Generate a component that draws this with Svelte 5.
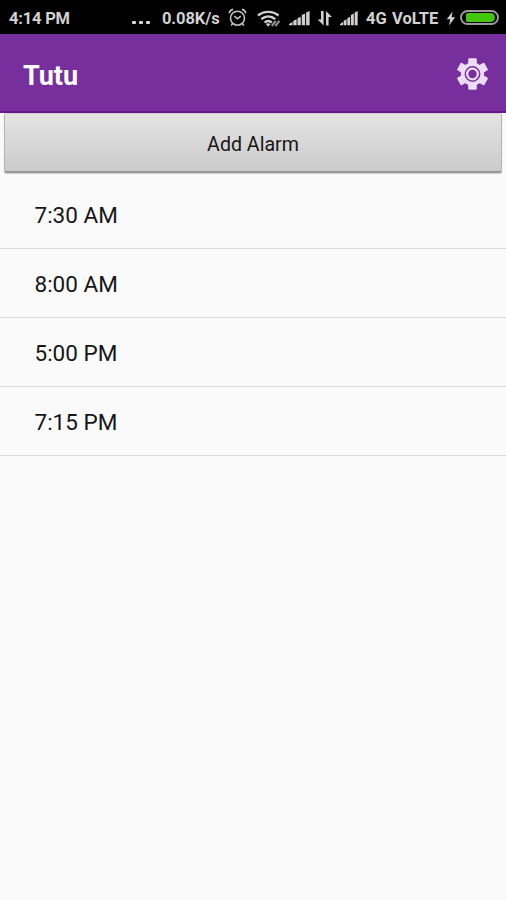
<script>
  const alarms = ['7:30 AM', '8:00 AM', '5:00 PM', '7:15 PM'];
</script>

{#snippet signal(width)}
  <svg class="signal" {width} height="16" viewBox="0 0 21 16" preserveAspectRatio="none">
    <path d="M0 15.2v-1.2l3.600-2v3.200zM4.300 15.2v-4.400l3.300-1.500v5.900zM8.500 15.2V8.200l3.300-1.500v8.500zM12.800 15.2V5l3.300-1.500v11.700zM17.100 15.2V2.500L20.600 1v14.200z" />
  </svg>
{/snippet}

<div class="screen">
  <header class="status">
    <span class="clock">4:14 PM</span>
    <span class="dots"><i></i><i></i><i></i></span>
    <span class="speed">0.08K/s</span>
    <svg class="alarm" width="19" height="19" viewBox="0 0 19 19">
      <circle cx="9.5" cy="10.2" r="7" />
      <path d="M1.2 5.2C1.7 3 3 1.8 5 1.4M14 1.4c2 .4 3.3 1.6 3.8 3.8M6.3 8.2l3.2 2.6 3.2-2.6M4.5 15.8l-1.3 1.7M14.5 15.8l1.3 1.7" />
    </svg>
    <svg class="wifi" width="24" height="17" viewBox="0 0 24 17">
      <path class="arcs" d="M1 5.500C6.800.6 15.700.6 21.500 5.500M4.300 9.200C8.500 5.600 14 5.600 18.200 9.200M7.600 12.600c2.200-2 5.100-2 7.300 0" />
      <path d="M8.900 14.100c1.400-1 3.200-1 4.600 0L11.200 16.800z" />
      <path class="activity" d="M14.800 16l4-5.200M18.400 16l4-5.200" />
    </svg>
    {@render signal(21)}
    <svg class="arrows" width="16" height="16" viewBox="0 0 16 16">
      <path d="M4 1h2.600v14.500L.6 9.500H4zM9 15.500V1l6 6h-3.400v8.500z" />
    </svg>
    {@render signal(18)}
    <span class="network">4G</span>
    <span class="volte">VoLTE</span>
    <svg class="bolt" width="10" height="15" viewBox="0 0 10 15">
      <path d="M6.500.500L.8 8.300h3.400L3 14.500l6.200-8.200H5.600z" />
    </svg>
    <div class="battery"><div class="charge"></div></div>
  </header>

  <div class="toolbar">
    <h1>Tutu</h1>
    <svg class="gear" width="38" height="38" viewBox="-19.5 -19 38 38">
      <circle r="11.600" />
      {#each [0, 60, 120] as angle}
        <path transform="rotate({angle})" d="M-3.500-15.700h7l.8.7v30l-.8.700h-7l-.8-.7v-30z" />
      {/each}
      <circle class="groove" r="7.200" />
      <circle class="hub" r="4.200" />
    </svg>
  </div>

  <button class="add">Add Alarm</button>

  <ul>
    {#each alarms as alarm}
      <li>{alarm}</li>
    {/each}
  </ul>
</div>

<style>
  :global(body) { margin: 0; background: #fafafa; }

  .screen {
    width: 506px;
    height: 900px;
    overflow: hidden;
    display: flex;
    flex-direction: column;
    background: #fafafa;
    font-family: Roboto, "Liberation Sans", sans-serif;
    color: #161616;
  }

  .status {
    height: 34px;
    flex: none;
    box-sizing: border-box;
    padding: 2px 6px 0 9px;
    display: flex;
    align-items: center;
    background: #000;
    color: #d2d2d2;
    font-size: 16.500px;
    font-weight: 700;
    line-height: 32px;
    white-space: nowrap;
  }

  .status > * { flex: none; }
  .status > span { padding-top: 1px; }
  .status svg { fill: #d0d0d0; }

  .clock { width: 123px; letter-spacing: -0.2px; }

  .status > .dots { display: flex; gap: 3px; width: 30px; padding-top: 9px; }
  .dots i { width: 4px; height: 3px; border-radius: 1px; background: #d6d6d6; }

  .speed { width: 66px; letter-spacing: -0.1px; }

  .status .alarm { fill: none; stroke: #c4c4c4; stroke-width: 1.600; margin-right: 10px; margin-top: -2px; }

  .wifi { margin-right: 8px; }
  .wifi .arcs { fill: none; stroke: #d0d0d0; stroke-width: 2.400; }
  .wifi .activity { stroke: #909090; stroke-width: 2.200; }

  .arrows { margin: 0 7px 0 7px; }

  .network { width: 26px; margin-left: 8px; }
  .volte { width: 54px; }
  .bolt { margin-right: 4px; }

  .battery {
    box-sizing: border-box;
    width: 39px;
    height: 15px;
    margin-top: -1px;
    border: 2px solid #9a9a9a;
    border-radius: 8px;
    padding: 1px 2px 1px 4px;
  }
  .charge { height: 9px; border-radius: 2px 5px 5px 2px; background: #44c510; }

  .toolbar {
    flex: none;
    height: 79px;
    box-sizing: border-box;
    padding: 0 15px 0 23px;
    display: flex;
    align-items: center;
    justify-content: space-between;
    background: #772f9e;
    border-bottom: 2px solid #6a168f;
  }

  h1 { margin: 6px 0 0; font-size: 27px; line-height: 32px; font-weight: 700; color: #fff; }

  .gear { fill: #ecdcf5; margin-top: 2px; }
  .gear .groove { fill: none; stroke: #772f9e; stroke-width: 1.400; }
  .gear .hub { fill: #772f9e; }

  .add {
    flex: none;
    height: 60px;
    margin: 0 4px;
    padding: 5px 0 0;
    border: 1px solid #b5b5b5;
    border-top-color: #cfcbc9;
    border-bottom: 2px solid #999;
    border-radius: 2px;
    background: linear-gradient(#e4e4e4, #cbcbcb);
    box-shadow: 0 1px 1px #ccc;
    font: 400 19.600px/24px Roboto, "Liberation Sans", sans-serif;
    color: #161616;
  }

  ul { margin: 7px 0 0; padding: 0; list-style: none; }

  li {
    box-sizing: border-box;
    height: 69px;
    padding-left: 34.500px;
    border-bottom: 1.500px solid #d9d9d9;
    font-size: 22.500px;
    line-height: 71px;
  }
</style>
